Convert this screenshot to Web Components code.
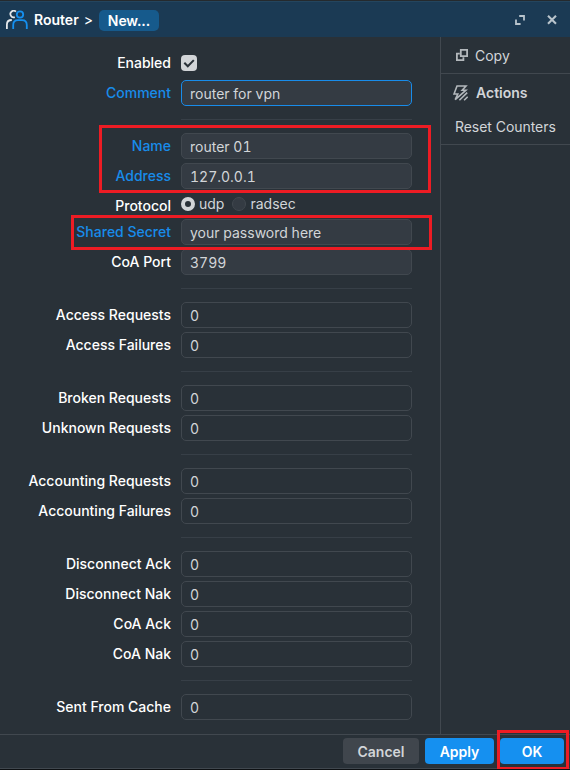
<!DOCTYPE html>
<html lang="en">
<head>
<meta charset="utf-8">
<title>Router</title>
<style>
    body {
        margin: 0;
        background: #293138;
        font-family: Inter, "Liberation Sans", sans-serif;
        font-size: 14px;
        color: #d2d5d8;
    }
</style>
</head>
<body>
<router-window>
    <title-bar slot="title" name="Router" page="New..."></title-bar>

    <form-row label="Enabled"><check-box></check-box></form-row>
    <form-row label="Comment" changed><text-field value="router for vpn" focused></text-field></form-row>
    <form-divider></form-divider>
    <form-row label="Name" changed><text-field value="router 01"></text-field></form-row>
    <form-row label="Address" changed><text-field value="127.0.0.1"></text-field></form-row>
    <form-row label="Protocol" small>
        <radio-option label="udp" checked></radio-option>
        <radio-option label="radsec"></radio-option>
    </form-row>
    <form-row label="Shared Secret" changed><text-field value="your password here"></text-field></form-row>
    <form-row label="CoA Port"><text-field value="3799"></text-field></form-row>
    <form-divider></form-divider>
    <form-row label="Access Requests"><text-field value="0" readonly></text-field></form-row>
    <form-row label="Access Failures"><text-field value="0" readonly></text-field></form-row>
    <form-divider></form-divider>
    <form-row label="Broken Requests"><text-field value="0" readonly></text-field></form-row>
    <form-row label="Unknown Requests"><text-field value="0" readonly></text-field></form-row>
    <form-divider></form-divider>
    <form-row label="Accounting Requests"><text-field value="0" readonly></text-field></form-row>
    <form-row label="Accounting Failures"><text-field value="0" readonly></text-field></form-row>
    <form-divider></form-divider>
    <form-row label="Disconnect Ack"><text-field value="0" readonly></text-field></form-row>
    <form-row label="Disconnect Nak"><text-field value="0" readonly></text-field></form-row>
    <form-row label="CoA Ack"><text-field value="0" readonly></text-field></form-row>
    <form-row label="CoA Nak"><text-field value="0" readonly></text-field></form-row>
    <form-divider></form-divider>
    <form-row label="Sent From Cache"><text-field value="0" readonly></text-field></form-row>

    <side-menu slot="side"></side-menu>

    <push-button slot="footer" style="width: 76px">Cancel</push-button>
    <push-button slot="footer" primary style="width: 69px">Apply</push-button>
    <push-button slot="footer" primary style="width: 64px">OK</push-button>

    <red-mark slot="marks" style="left: 99px; top: 125px; width: 332px; height: 68px"></red-mark>
    <red-mark slot="marks" style="left: 71px; top: 215px; width: 361px; height: 35px"></red-mark>
    <red-mark slot="marks" style="left: 497px; top: 730px; width: 72px; height: 40px"></red-mark>
</router-window>

<script>
// Common base: every element renders its template once it is attached
class BaseElement extends HTMLElement {
    constructor() {
        super();
        this.attachShadow({ mode: "open" });
    }

    connectedCallback() {
        const template = document.createElement("template");
        template.innerHTML = `<style>* { box-sizing: border-box; } ${this.getStyles()}</style>${this.getMarkup()}`;
        this.shadowRoot.replaceChildren(template.content.cloneNode(true));
    }

    attr(name) {
        return this.getAttribute(name) || "";
    }

    getMarkup() {
        return "";
    }
}

class RouterWindow extends BaseElement {
    getStyles() {
        return `
            :host {
                display: flex;
                flex-direction: column;
                position: relative;
                box-sizing: border-box;
                width: 570px;
                height: 770px;
                overflow: hidden;
                border-bottom: 1px solid #0d1013;
            }
            .content { flex: 1; display: flex; min-height: 0; }
            form {
                flex: 1;
                display: flex;
                flex-direction: column;
                gap: 4px;
                padding-top: 13px;
            }
            aside { width: 130px; border-left: 1px solid #41484f; }
            footer {
                display: flex;
                justify-content: flex-end;
                gap: 6px;
                height: 35px;
                padding: 3px 6px 0 0;
                border-top: 1px solid #41484f;
                border-bottom: 1px solid #41484f;
            }
            /* the last mark reaches the bottom edge, over the border */
            ::slotted(red-mark) { z-index: 1; }
        `;
    }

    getMarkup() {
        return `
            <slot name="title"></slot>
            <div class="content">
                <form><slot></slot></form>
                <aside><slot name="side"></slot></aside>
            </div>
            <footer><slot name="footer"></slot></footer>
            <slot name="marks"></slot>
        `;
    }
}

class TitleBar extends BaseElement {
    getStyles() {
        return `
            :host {
                display: flex;
                align-items: center;
                box-sizing: border-box;
                height: 37px;
                padding: 2px 12px 0 6px;
                background: #1b3a54;
                border-top: 1px solid #252a2e;
                box-shadow: inset 0 1px #24455e;
                color: #fff;
                font-weight: 600;
            }
            svg { display: block; }
            .name { margin: -1px 0 0 6px; }
            .arrow { margin: -1px 6px 0 5px; font-weight: 400; font-size: 14px; }
            .page {
                height: 21px;
                width: 60px;
                line-height: 21px;
                text-align: center;
                letter-spacing: -.1px;
                border-radius: 5px;
                background: #165a8c;
            }
            .tools { margin-left: auto; display: flex; align-items: center; gap: 21px; }
        `;
    }

    getMarkup() {
        return `
            <svg width="22" height="20" viewBox="0 0 22 20" fill="none" stroke-width="1.8">
                <path d="M10 1.7A3.3 3.3 0 1 0 8.8 7.2M.9 19v-4.5Q.9 10 5.8 10" stroke="#e4e8eb"/>
                <circle cx="14" cy="4.5" r="3.2" stroke="#1590f0"/>
                <path d="M7.2 19v-4Q7.2 10.1 12 10.1h4Q20.8 10.1 20.8 15v4" stroke="#1590f0"/>
            </svg>
            <span class="name">${this.attr("name")}</span>
            <span class="arrow">&gt;</span>
            <span class="page">${this.attr("page")}</span>
            <div class="tools">
                <svg width="10" height="10" viewBox="0 0 10 10" fill="none" stroke="#b9c4cc" stroke-width="1.8">
                    <path d="M4.2 1h4.8v4.6M1 4.6V9h4.6"/>
                </svg>
                <svg width="12" height="10" viewBox="0 0 12 10" stroke="#b9c4cc" stroke-width="2.1">
                    <path d="M2 .8l8 8M10 .8l-8 8"/>
                </svg>
            </div>
        `;
    }
}

class FormRow extends BaseElement {
    getStyles() {
        return `
            :host { display: flex; height: 26px; align-items: center; }
            :host([small]) { height: 22px; }
            .label {
                width: 171px;
                margin-right: 10px;
                padding-bottom: 1px;
                text-align: right;
                white-space: nowrap;
                font-weight: 500;
                color: #fff;
            }
            :host([changed]) .label { color: #188cea; }
            :host([small]) .label { padding: 3px 0 0; }
        `;
    }

    getMarkup() {
        return `<span class="label">${this.attr("label")}</span><slot></slot>`;
    }
}

class FormDivider extends BaseElement {
    getStyles() {
        return `
            :host {
                display: block;
                height: 1px;
                width: 231px;
                margin: 9px 0 9px 181px;
                background: #373f47;
            }
        `;
    }
}

class TextField extends BaseElement {
    getStyles() {
        return `
            :host {
                display: block;
                box-sizing: border-box;
                width: 231px;
                height: 26px;
                padding: 0 8px;
                line-height: 25px;
                font-variant-numeric: tabular-nums;
                border: 1px solid #41484f;
                border-radius: 5px;
                background: #343b43;
            }
            :host([readonly]) { background: none; }
            :host([focused]) { border-color: #188cea; }
        `;
    }

    getMarkup() {
        return `<span>${this.attr("value")}</span>`;
    }
}

class CheckBox extends BaseElement {
    getStyles() {
        return `
            :host { display: block; width: 16px; height: 16px; border-radius: 4px; background: #d2d5d8; }
            svg { display: block; }
        `;
    }

    getMarkup() {
        return `
            <svg width="16" height="16" viewBox="0 0 16 16" fill="none" stroke="#293138" stroke-width="2">
                <path d="M3.3 7.7l3.5 3.6 6-6.2"/>
            </svg>
        `;
    }
}

class RadioOption extends BaseElement {
    getStyles() {
        return `
            :host { display: flex; align-items: center; height: 18px; margin-right: 8px; }
            i {
                width: 14px;
                height: 14px;
                margin-right: 4px;
                border-radius: 50%;
                border: 1px solid #41484f;
                background: #343b43;
            }
            span { padding-bottom: 1px; }
            :host([checked]) i { border: 4px solid #d2d5d8; background: #293138; }
        `;
    }

    getMarkup() {
        return `<i></i><span>${this.attr("label")}</span>`;
    }
}

class SideMenu extends BaseElement {
    getStyles() {
        return `
            :host { display: block; }
            div { display: flex; align-items: center; }
            svg { display: block; }
            .copy { height: 37px; padding-left: 15px; gap: 7px; border-bottom: 1px solid #41484f; }
            .group { flex-direction: column; align-items: stretch; height: 71px; border-bottom: 1px solid #41484f; }
            .head { height: 38px; padding-left: 12px; gap: 8px; font-weight: 600; }
            .head span { padding-bottom: 1px; }
            .item { height: 28px; padding-left: 14px; letter-spacing: -.05px; }
        `;
    }

    getMarkup() {
        return `
            <div class="copy">
                <svg width="12" height="12" viewBox="0 0 12 12" fill="none" stroke="#b3b8bc" stroke-width="1.8">
                    <path d="M4.8 .9h6.3v6.3H4.8z"/>
                    <path d="M3.8 4.6H.9v6.5h6.5V8.3"/>
                </svg>
                <span>Copy</span>
            </div>
            <div class="group">
                <div class="head">
                    <svg width="15" height="16" viewBox="0 0 15 16" fill="none" stroke="#b3b8bc" stroke-width="1.6">
                        <path d="M4 1h9L9.2 5.2h3.8L2.2 14.6 4.8 9H1z"/>
                        <path d="M14.2 7.6l-7.8 7.6M14.7 11.8l-3.6 3.5"/>
                    </svg>
                    <span>Actions</span>
                </div>
                <div class="item">Reset Counters</div>
            </div>
        `;
    }
}

class PushButton extends BaseElement {
    getStyles() {
        return `
            :host {
                display: block;
                box-sizing: border-box;
                height: 26px;
                line-height: 27px;
                text-align: center;
                border-radius: 4px;
                background: #40464d;
                font-weight: 600;
            }
            :host([primary]) { background: #1590f0; color: #fff; }
        `;
    }

    getMarkup() {
        return `<slot></slot>`;
    }
}

class RedMark extends BaseElement {
    getStyles() {
        return `
            :host { position: absolute; box-sizing: border-box; border: 3px solid #ed1c24; pointer-events: none; }
        `;
    }
}

customElements.define("router-window", RouterWindow);
customElements.define("title-bar", TitleBar);
customElements.define("form-row", FormRow);
customElements.define("form-divider", FormDivider);
customElements.define("text-field", TextField);
customElements.define("check-box", CheckBox);
customElements.define("radio-option", RadioOption);
customElements.define("side-menu", SideMenu);
customElements.define("push-button", PushButton);
customElements.define("red-mark", RedMark);
</script>
</body>
</html>
